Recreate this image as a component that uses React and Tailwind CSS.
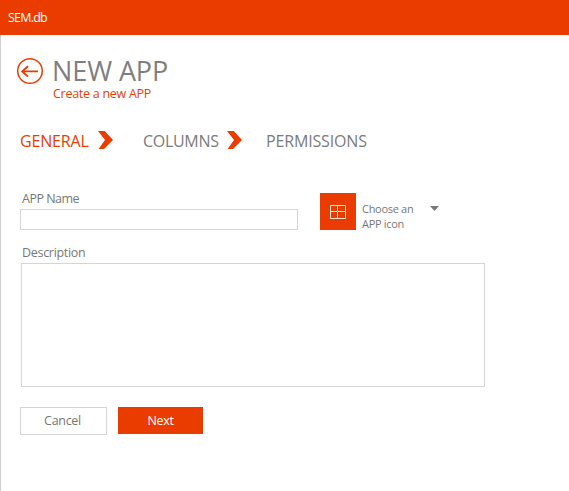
function Step({ children, active, className }) {
  return (
    <span className={`text-[16px] leading-5 whitespace-nowrap ${active ? "text-[#eb3c00]" : "text-[#7b7b7b]"} ${className}`}>
      {children}
    </span>
  );
}

function Chevron() {
  return (
    <svg className="h-[18px] w-[15px] shrink-0" viewBox="0 0 15 18" fill="#eb3c00">
      <path d="M0 0H6.8L15 9L6 18H.6L7 9Z" />
    </svg>
  );
}

export default function App() {
  return (
    <div className="flex h-[491px] w-[569px] flex-col overflow-hidden bg-white font-['Open_Sans','Noto_Sans',sans-serif] text-[#777777]">
      <header className="flex h-[35px] shrink-0 items-center bg-[#eb3c00] pl-2 text-[12.5px] leading-4 text-white">
        <span className="tracking-[-0.8px]">SEM.db</span>
      </header>
      <main className="flex flex-1 flex-col border-l border-[#d0d0d0] pl-[19px] pt-5">
        <div className="-ml-[4px] flex h-[47px]">
          <svg className="mt-[2px] h-7 w-7 shrink-0" viewBox="0 0 28 28" fill="none" stroke="#eb3c00">
            <circle cx="14" cy="14" r="12.3" strokeWidth="1.5" />
            <path d="M22 14.4H6.5M12 9.2L6.2 14.4L12 19.6" strokeWidth="1.9" />
          </svg>
          <div className="ml-2 flex flex-col whitespace-nowrap">
            <h1 className="text-[27px] leading-[31px] tracking-[-0.1px] text-[#7f7f7f]">NEW APP</h1>
            <p className="pl-px text-[12.5px] leading-4 tracking-[-0.27px] text-[#eb3c00]">Create a new APP</p>
          </div>
        </div>

        <nav className="mt-[29px] flex h-5">
          <div className="flex w-[123px]">
            <Step active className="w-[78px] tracking-[-0.15px]">GENERAL</Step>
            <Chevron />
          </div>
          <div className="flex w-[123px]">
            <Step className="w-[84px] tracking-[-0.3px]">COLUMNS</Step>
            <Chevron />
          </div>
          <Step className="tracking-[-0.15px]">PERMISSIONS</Step>
        </nav>

        <div className="mt-[39px] flex h-10 text-[12.5px] leading-4 tracking-[-0.4px]">
          <label className="flex w-[278px] flex-col">
            <span className="pl-0.5 pt-px tracking-[-0.5px]">APP Name</span>
            <input className="mt-[2px] h-[21px] w-full border border-[#d5d5d5] px-1 outline-none" />
          </label>
          <button className="ml-[22px] mt-[3px] flex h-[37px] w-9 shrink-0 items-start bg-[#eb3c00] pl-[10px] pt-3">
            <svg className="h-[14px] w-[16px]" viewBox="0 0 16 14" fill="none" stroke="#ffe3d8">
              <path d="M.5 .5H15.5V13.5H.5ZM7.5 .5V13.5M.5 6.5H15.5" />
            </svg>
          </button>
          <div className="ml-1.5 mt-[11px] w-[68px] text-[11px] leading-[15px] tracking-[-0.3px]">
            Choose an
            <br />
            APP icon
          </div>
          <svg className="mt-4 h-[5px] w-[9px]" viewBox="0 0 9 5" fill="#777777">
            <path d="M0 0H9L4.5 5Z" />
          </svg>
        </div>

        <label className="ml-px mt-[14px] flex flex-col text-[12.5px] leading-4 tracking-[-0.3px]">
          <span className="pl-px pt-px">Description</span>
          <textarea className="mt-[2px] h-[124px] w-[464px] resize-none border border-[#d5d5d5] p-1 outline-none" />
        </label>

        <div className="mt-5 flex items-start text-[12.5px] tracking-[-0.3px]">
          <button className="h-7 w-[87px] border border-[#d5d5d5] pr-0.5 text-[#777777]">Cancel</button>
          <button className="ml-[11px] h-[27px] w-[85px] bg-[#eb3c00] pt-px font-medium tracking-[-0.3px] text-white">Next</button>
        </div>
      </main>
    </div>
  );
}
